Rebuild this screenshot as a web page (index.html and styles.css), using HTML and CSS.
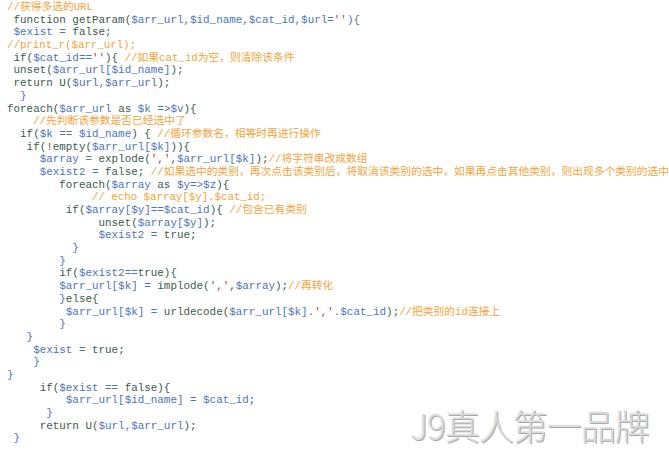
FILE: index.html
```html
<!DOCTYPE html>
<html lang="zh-CN">
<head>
<meta charset="utf-8">
<title>getParam</title>
<link rel="stylesheet" href="styles.css">
</head>
<body>
<div class="page">
<pre class="code"><div class="ln"><span class="c">//获得多选的URL</span></div><div class="ln"> function getParam(<span class="v">$arr_url,$id_name,$cat_id,$url=</span><span class="s">''</span><span class="v">){</span></div><div class="ln"> <span class="v">$exist =</span> false;</div><div class="ln"><span class="c">//print_r($arr_url);</span></div><div class="ln"> if(<span class="v">$cat_id==</span><span class="s">''</span>){ <span class="c">//如果cat_id为空，则清除该条件</span></div><div class="ln"> unset(<span class="v">$arr_url[$id_name]</span>);</div><div class="ln"> return U(<span class="v">$url,$arr_url</span>);</div><div class="ln">  <span class="v">}</span></div><div class="ln">foreach(<span class="v">$arr_url</span> as <span class="v">$k =&gt;$v</span>){</div><div class="ln">    <span class="c">//先判断该参数是否已经选中了</span></div><div class="ln">  if(<span class="v">$k == $id_name</span>) { <span class="c">//循环参数名，相等时再进行操作</span></div><div class="ln">   if(!empty(<span class="v">$arr_url[$k]</span>)){</div><div class="ln">     <span class="v">$array =</span> explode(<span class="s">','</span>,<span class="v">$arr_url[$k]</span>);<span class="c">//将字符串改成数组</span></div><div class="ln">     <span class="v">$exist2 =</span> false; <span class="c">//如果选中的类别，再次点击该类别后，将取消该类别的选中，如果再点击其他类别，则出现多个类别的选中</span></div><div class="ln">        foreach(<span class="v">$array</span> as <span class="v">$y=&gt;$z</span>){</div><div class="ln">             <span class="c">// echo $array[$y].$cat_id;</span></div><div class="ln">         if(<span class="v">$array[$y]==$cat_id</span>){ <span class="c">//包含已有类别</span></div><div class="ln">              unset(<span class="v">$array[$y]</span>);</div><div class="ln">              <span class="v">$exist2 =</span> true;</div><div class="ln">          <span class="v">}</span></div><div class="ln">        <span class="v">}</span></div><div class="ln">        if(<span class="v">$exist2==</span>true){</div><div class="ln">        <span class="v">$arr_url[$k] =</span> implode(<span class="s">','</span>,<span class="v">$array</span>);<span class="c">//再转化</span></div><div class="ln">        <span class="v">}</span>else{</div><div class="ln">         <span class="v">$arr_url[$k] =</span> urldecode(<span class="v">$arr_url[$k].</span><span class="s">','</span><span class="v">.$cat_id</span>);<span class="c">//把类别的id连接上</span></div><div class="ln">        <span class="v">}</span></div><div class="ln">   <span class="v">}</span></div><div class="ln">    <span class="v">$exist =</span> true;</div><div class="ln">    <span class="v">}</span></div><div class="ln"><span class="v">}</span></div><div class="ln">     if(<span class="v">$exist ==</span> false){</div><div class="ln">         <span class="v">$arr_url[$id_name] = $cat_id</span>;</div><div class="ln">      <span class="v">}</span></div><div class="ln">     return U(<span class="v">$url,$arr_url</span>);</div><div class="ln"> <span class="v">}</span></div></pre>
<div class="mark">J9真人第一品牌</div>
</div>
</body>
</html>
```
FILE: styles.css
```css
html, body {
  margin: 0;
  padding: 0;
  background: #ffffff;
}
.page {
  position: relative;
  width: 669px;
  height: 453px;
  overflow: hidden;
}
.code {
  margin: 0;
  padding: 1px 0 0 7px;
  font-family: "Liberation Mono", "Noto Sans CJK SC", monospace;
  font-size: 10.9px;
  color: #3a5c4a;
  white-space: pre;
}
.ln {
  height: 12.7px;
  line-height: 12.7px;
  white-space: pre;
}
.v { color: #4a74c0; }
.s { color: #c23a2e; }
.c {
  color: #f2a43a;
  font-size: 10.75px;
}
.mark {
  position: absolute;
  left: 410px;
  top: 403px;
  font-family: "Noto Sans CJK SC", "Noto Sans", sans-serif;
  font-weight: 200;
  font-size: 35px;
  line-height: 44px;
  letter-spacing: -1px;
  color: #dadada;
  text-shadow: 1px 1px 0 #a8a8a8, -1px -1px 0 #f6f6f6;
  white-space: nowrap;
}
```
